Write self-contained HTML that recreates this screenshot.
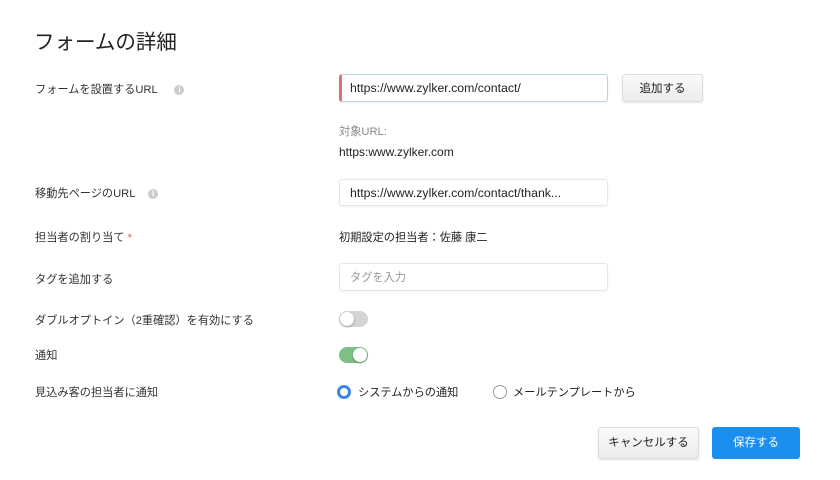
<!DOCTYPE html><html><head><meta charset="utf-8"><style>
body{margin:0;width:840px;height:480px;background:#fff;font-family:"Liberation Sans","Noto Sans CJK JP",sans-serif;color:#222;position:relative;overflow:hidden}
.a{position:absolute;white-space:nowrap}
.l{font-size:11.2px;color:#333;transform:translateY(-50%)}
.inp{position:absolute;left:339px;width:269px;height:27px;border:1px solid #e6e6e6;border-radius:3px;box-sizing:border-box;font-size:12.3px;line-height:25px;padding-left:10px;box-shadow:0 1px 2px rgba(0,0,0,.05)}
.info{display:inline-block;width:10px;height:10px;border-radius:50%;background:#ccc;color:#fff;font-size:8px;line-height:10px;text-align:center;font-weight:bold;vertical-align:middle}
.btn{position:absolute;border-radius:3px;font-size:11.5px;text-align:center;box-sizing:border-box}
.tg{position:absolute;left:339px;width:29px;height:16px;border-radius:8px}
.tg i{position:absolute;top:1px;width:14px;height:14px;border-radius:50%;background:#fff;box-shadow:0 1px 2px rgba(0,0,0,.3)}
</style></head><body>
<div class="a" style="left:34px;top:25px;font-size:20.5px;color:#222">フォームの詳細</div>
<div class="a l" style="left:35px;top:89px">フォームを設置するURL <span class="info" style="margin-left:14px">i</span></div>
<div class="a l" style="left:35px;top:193px">移動先ページのURL <span class="info" style="margin-left:10px">i</span></div>
<div class="a l" style="left:35px;top:237px">担当者の割り当て <span style="color:#e55">*</span></div>
<div class="a l" style="left:35px;top:279px">タグを追加する</div>
<div class="a l" style="left:35px;top:320px">ダブルオプトイン（2重確認）を有効にする</div>
<div class="a l" style="left:35px;top:355px">通知</div>
<div class="a l" style="left:35px;top:392px">見込み客の担当者に通知</div>
<div class="inp" style="top:74px;height:28px;border-color:#b9d3e6;border-left:3px solid #d9707a;padding-left:8px;line-height:27px">https://www.zylker.com/contact/</div>
<div class="btn" style="left:622px;top:74px;width:81px;height:28px;line-height:28px;background:linear-gradient(#fafafa,#ececec);border:1px solid #ddd;box-shadow:0 1px 2px rgba(0,0,0,.1)">追加する</div>
<div class="a l" style="left:339px;top:131px;color:#888">対象URL:</div>
<div class="a l" style="left:339px;top:152px;color:#222;font-size:12px">https:www.zylker.com</div>
<div class="inp" style="top:179px;line-height:27px">https://www.zylker.com/contact/thank...</div>
<div class="a l" style="left:339px;top:237px;color:#222">初期設定の担当者：佐藤 康二</div>
<div class="inp" style="top:263px;height:28px;color:#999;font-size:11.2px;line-height:29px">タグを入力</div>
<div class="tg" style="top:311px;background:#d4d4d4"><i style="left:1px"></i></div>
<div class="tg" style="top:347px;background:#7cc086"><i style="right:1px"></i></div>
<div class="a" style="left:337px;top:385px;width:8px;height:8px;border:3px solid #3b86e0;border-radius:50%"></div>
<div class="a l" style="left:358px;top:392px;color:#222">システムからの通知</div>
<div class="a" style="left:493px;top:385px;width:12px;height:12px;border:1px solid #999;border-radius:50%"></div>
<div class="a l" style="left:513px;top:392px;color:#222">メールテンプレートから</div>
<div class="btn" style="left:598px;top:427px;width:101px;height:32px;line-height:30px;background:linear-gradient(#fafafa,#ebebeb);border:1px solid #ddd;box-shadow:0 1px 2px rgba(0,0,0,.12)">キャンセルする</div>
<div class="btn" style="left:712px;top:427px;width:88px;height:32px;line-height:32px;background:#1a8ff0;color:#fff">保存する</div>
</body></html>
